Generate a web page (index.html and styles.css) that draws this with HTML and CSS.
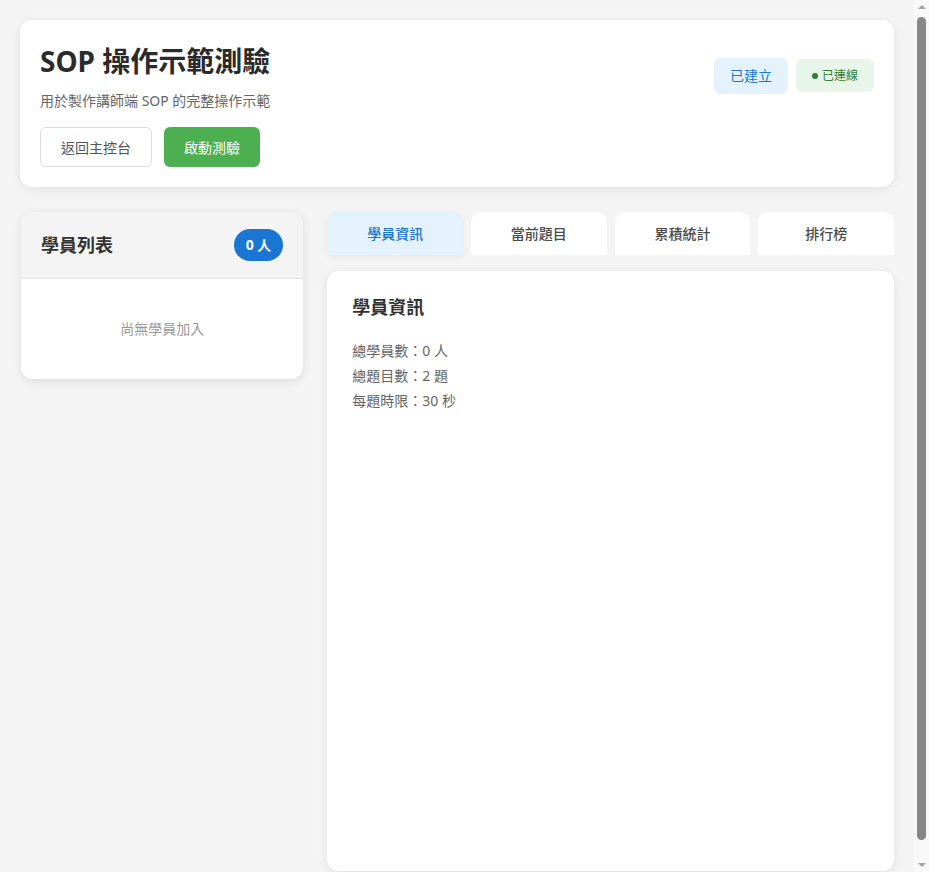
FILE: index.html
```html
<!DOCTYPE html>
<html lang="zh-Hant">
<head>
<meta charset="utf-8">
<title>SOP 操作示範測驗</title>
<link rel="stylesheet" href="styles.css">
</head>
<body>
<div class="page">
  <header class="card header">
    <div class="header-top">
      <div class="title-block">
        <h1 class="title">SOP 操作示範測驗</h1>
        <p class="subtitle">用於製作講師端 SOP 的完整操作示範</p>
      </div>
      <div class="status">
        <span class="badge badge-created">已建立</span>
        <span class="badge badge-online"><span class="dot"></span>已連線</span>
      </div>
    </div>
    <div class="actions">
      <button class="btn btn-outline">返回主控台</button>
      <button class="btn btn-green">啟動測驗</button>
    </div>
  </header>

  <main class="main">
    <section class="student-panel">
      <div class="panel-head">
        <h2 class="panel-title">學員列表</h2>
        <span class="count-pill">0 人</span>
      </div>
      <div class="panel-body">
        <p class="empty">尚無學員加入</p>
      </div>
    </section>

    <section class="right-col">
      <nav class="tabs">
        <div class="tab tab-active">學員資訊</div>
        <div class="tab">當前題目</div>
        <div class="tab">累積統計</div>
        <div class="tab">排行榜</div>
      </nav>
      <div class="content-panel">
        <h3 class="content-title">學員資訊</h3>
        <p class="info-line">總學員數：0 人</p>
        <p class="info-line">總題目數：2 題</p>
        <p class="info-line">每題時限：30 秒</p>
      </div>
    </section>
  </main>
</div>

<div class="scrollbar" aria-hidden="true">
  <span class="sb-arrow sb-up"></span>
  <span class="sb-thumb"></span>
  <span class="sb-arrow sb-down"></span>
</div>
</body>
</html>
```

FILE: styles.css
```css
* { box-sizing: border-box; }

html, body {
  margin: 0;
  padding: 0;
}

body {
  background: #f4f4f4;
  font-family: "Noto Sans", "Noto Sans CJK TC", sans-serif;
  color: #333;
}

.page {
  padding: 20px 35px 20px 20px;
}

/* decorative scrollbar strip (the page is slightly taller than the window) */
.scrollbar {
  position: fixed;
  top: 0;
  right: 0;
  width: 15px;
  height: 100vh;
  background: #f8f8f8;
  display: flex;
  flex-direction: column;
  align-items: center;
  padding: 5px 0;
}

.sb-arrow {
  width: 0;
  height: 0;
  border-left: 4px solid transparent;
  border-right: 4px solid transparent;
}

.sb-up {
  border-bottom: 4px solid #a3a3a3;
}

.sb-down {
  border-top: 4px solid #a3a3a3;
}

.sb-thumb {
  flex: 1;
  width: 9px;
  margin: 8px 0 23px;
  background: #878787;
  border-radius: 5px;
}

.card {
  background: #fff;
  border-radius: 12px;
  box-shadow: 0 2px 10px rgba(0, 0, 0, 0.08);
}

.header {
  padding: 20px;
}

.header-top {
  display: flex;
  justify-content: space-between;
  align-items: center;
}

.title {
  margin: 0;
  font-size: 28px;
  line-height: 42px;
  font-weight: 700;
  color: #2b2b2b;
}

.subtitle {
  margin: 9px 0 0;
  font-size: 14px;
  line-height: 20px;
  color: #666;
}

.status {
  display: flex;
  align-items: center;
  gap: 8px;
}

.badge {
  display: inline-flex;
  align-items: center;
  border-radius: 6px;
}

.badge-created {
  background: #e3f2fd;
  color: #1976d2;
  font-size: 14px;
  line-height: 20px;
  padding: 8px 16px;
}

.badge-online {
  background: #e8f5e9;
  color: #2e7d32;
  font-size: 12px;
  line-height: 17px;
  padding: 8px 16px;
  gap: 4px;
}

.dot {
  width: 6px;
  height: 6px;
  border-radius: 50%;
  background: #2e7d32;
}

.actions {
  display: flex;
  gap: 12px;
  margin-top: 16px;
}

.btn {
  height: 40px;
  padding: 0 20px;
  border-radius: 6px;
  font-family: inherit;
  font-size: 14px;
  cursor: pointer;
}

.btn-outline {
  background: #fff;
  border: 1px solid #ddd;
  color: #555;
}

.btn-green {
  background: #4caf50;
  border: none;
  color: #fff;
}

.main {
  display: grid;
  grid-template-columns: 1fr 2fr;
  gap: 24px;
  margin-top: 25px;
  align-items: start;
}

.student-panel {
  background: #fff;
  border-radius: 12px;
  box-shadow: 0 2px 10px rgba(0, 0, 0, 0.1);
  overflow: hidden;
  margin-left: 1px;
}

.panel-head {
  display: flex;
  justify-content: space-between;
  align-items: center;
  padding: 17px 20px;
  background: #f4f4f4;
  border-bottom: 1px solid #e0e0e0;
}

.panel-title {
  margin: 0;
  font-size: 18px;
  line-height: 24px;
  font-weight: 700;
  color: #333;
}

.count-pill {
  background: #1976d2;
  color: #fff;
  font-size: 14px;
  font-weight: 700;
  line-height: 20px;
  padding: 6px 12px;
  border-radius: 16px;
}

.panel-body {
  padding: 40px 20px;
}

.empty {
  margin: 0;
  text-align: center;
  font-size: 14px;
  line-height: 20px;
  color: #999;
}

.tabs {
  display: grid;
  grid-template-columns: repeat(4, 1fr);
  gap: 8px;
}

.tab {
  background: #fff;
  border-radius: 10px 10px 0 0;
  text-align: center;
  font-size: 14px;
  line-height: 19px;
  padding: 12px;
  color: #4a4a4a;
  font-weight: 500;
}

.tab-active {
  background: #e3f2fd;
  color: #1976d2;
  box-shadow: 0 2px 6px rgba(0, 0, 0, 0.06);
}

.content-panel {
  margin-top: 16px;
  background: #fff;
  border-radius: 12px;
  box-shadow: 0 2px 10px rgba(0, 0, 0, 0.08);
  min-height: 600px;
  padding: 23px 25px;
}

.content-title {
  margin: 0 0 17px;
  font-size: 18px;
  line-height: 27px;
  font-weight: 700;
  color: #333;
}

.info-line {
  margin: 0;
  font-size: 14px;
  line-height: 25px;
  color: #666;
}
```
